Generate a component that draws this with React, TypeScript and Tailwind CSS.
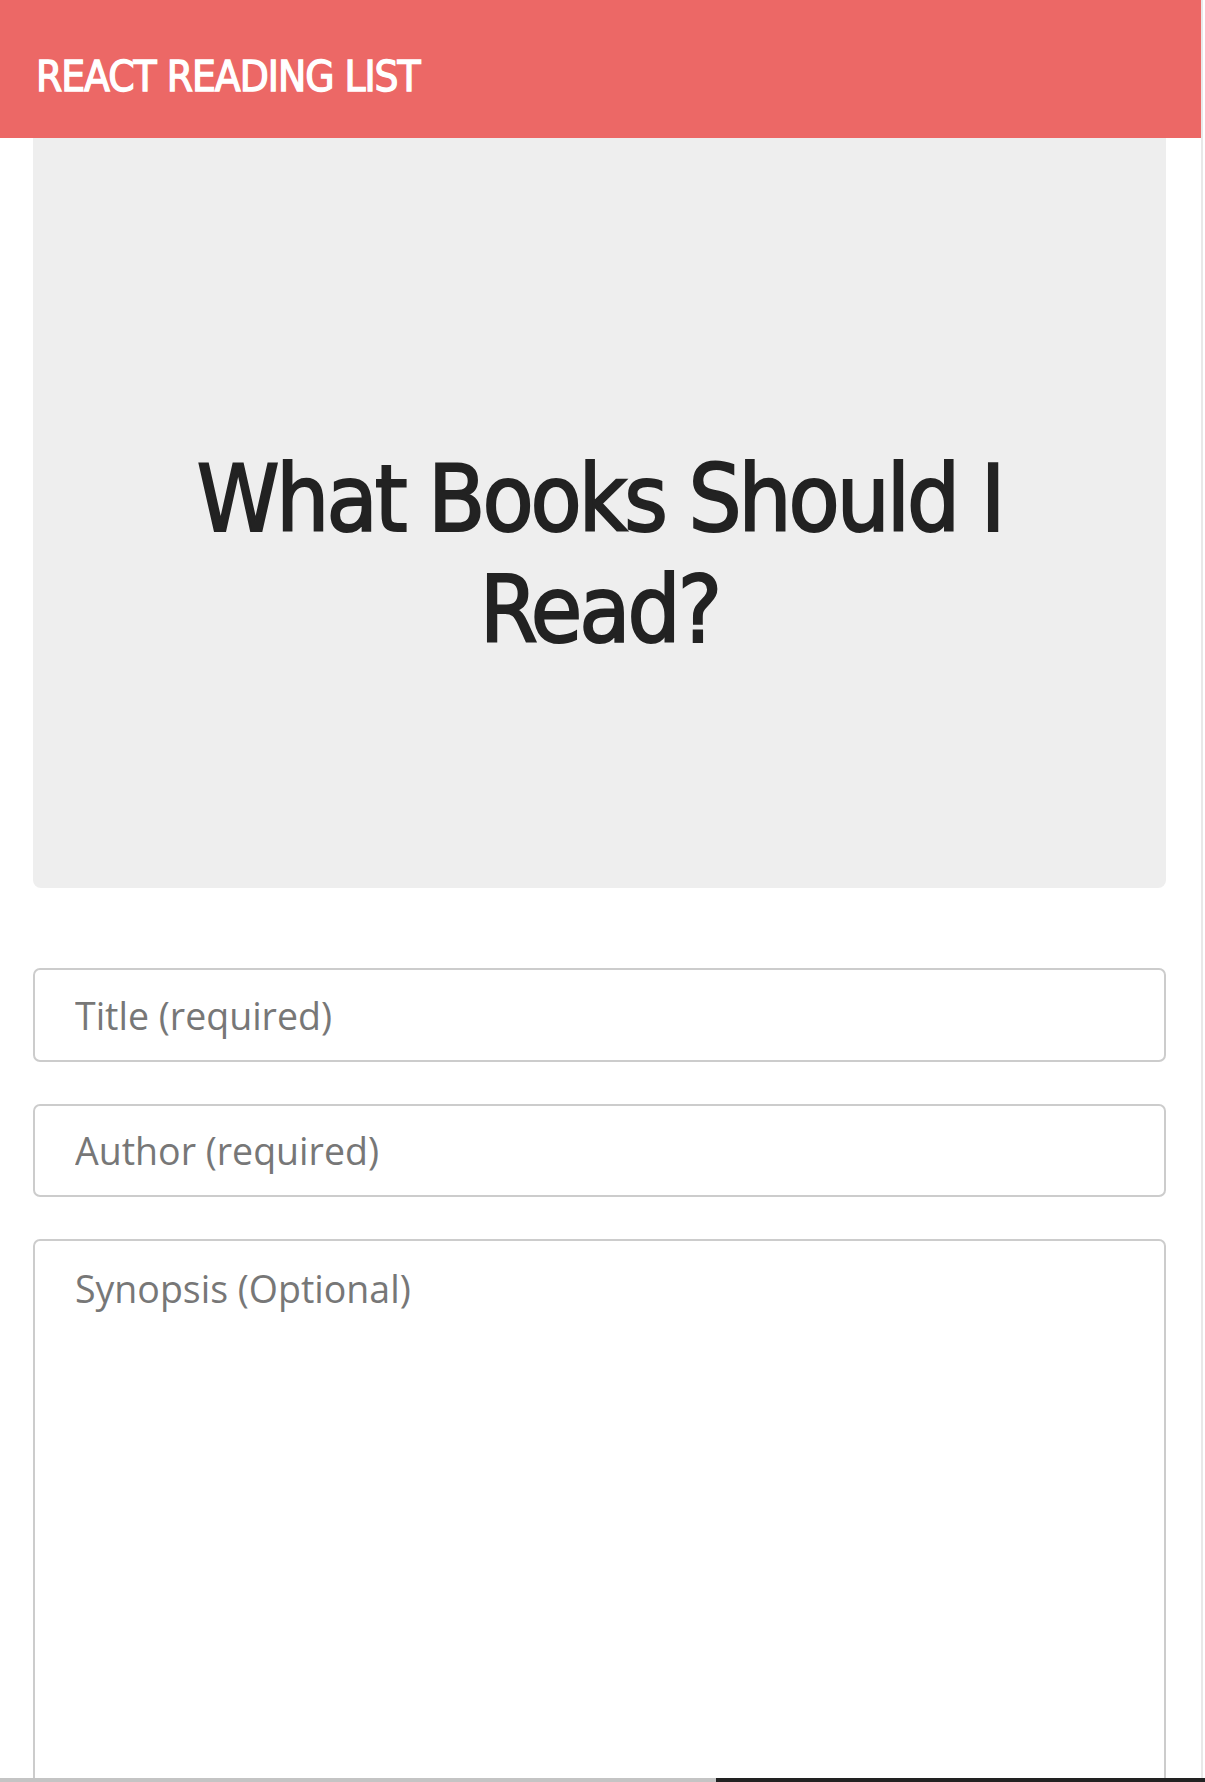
export default function App() {
  return (
    <div className="min-h-[1782px] w-[1205px] overflow-hidden bg-white">
      <div className="w-[1203px] border-r-2 border-[#e8e8e8]">
        {/* header bar */}
        <header className="flex h-[138px] items-center bg-[#ec6866] pl-[36px]">
          <h1 className="pt-[14px] font-['DejaVu_Sans',sans-serif] text-[42px] font-normal tracking-[-1px] text-white font-stretch-condensed [-webkit-text-stroke:1.3px_#ffffff]">
            REACT READING LIST
          </h1>
        </header>

        <main className="ml-[33px] w-[1133px]">
          <section className="flex h-[750px] items-center justify-center rounded-b-[8px] bg-[#eeeeee] px-10 pt-[84px]">
            <h2 className="text-center font-['DejaVu_Sans',sans-serif] text-[93px] leading-[111px] tracking-[-3px] text-[#222222] font-stretch-condensed [-webkit-text-stroke:2px_#222222]">
              What Books Should I
              <br />
              Read?
            </h2>
          </section>

          <form className="mt-[80px] flex flex-col gap-[42px]">
            <input
              type="text"
              placeholder="Title (required)"
              className="h-[94px] w-full rounded-[7px] border-2 border-[#cccccc] px-[40px] font-['Open_Sans',sans-serif] text-[37.5px] text-[#555] placeholder:text-[#777]"
            />
            <input
              type="text"
              placeholder="Author (required)"
              className="h-[93px] w-full rounded-[7px] border-2 border-[#cccccc] px-[40px] font-['Open_Sans',sans-serif] text-[37.5px] text-[#555] placeholder:text-[#777]"
            />
            <textarea
              placeholder="Synopsis (Optional)"
              className="h-[600px] w-full resize-none rounded-[7px] border-2 border-[#cccccc] px-[40px] pt-[20px] font-['Open_Sans',sans-serif] text-[37.5px] text-[#555] placeholder:text-[#777]"
            />
          </form>
        </main>
      </div>

      {/* scrollbar strip at bottom */}
      <div className="fixed bottom-0 left-0 flex h-[4px] w-[1205px]">
        <div className="w-[716px] bg-[#c4c4c4]" />
        <div className="flex-1 bg-[#222222]" />
      </div>
    </div>
  );
}
